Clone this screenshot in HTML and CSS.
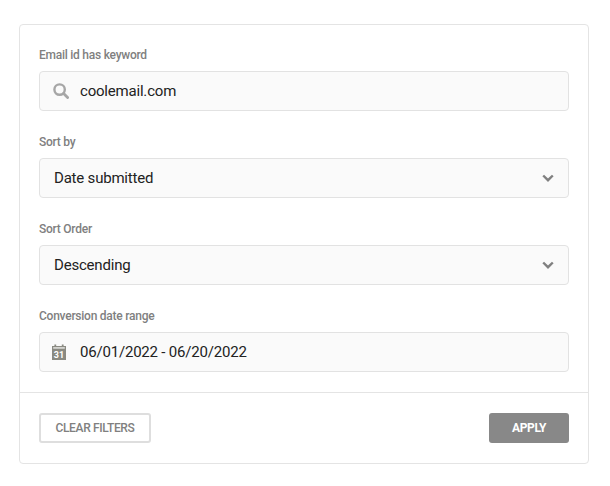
FILE: index.html
```html
<!DOCTYPE html>
<html lang="en">
<head>
<meta charset="utf-8">
<title>Filters</title>
<link rel="stylesheet" href="styles.css">
</head>
<body>
<form class="card">
  <div class="fields">
    <div class="field">
      <label class="label">Email id has keyword</label>
      <div class="control">
        <svg class="icon icon-search" width="16" height="16" viewBox="0 0 16 16"><circle cx="6.6" cy="6.6" r="5.2" fill="none" stroke="#a6a6a6" stroke-width="2.4"/><path d="M10.6 10.6 14.6 14.6" stroke="#a6a6a6" stroke-width="2.8" stroke-linecap="round"/></svg>
        <span class="value">coolemail.com</span>
      </div>
    </div>
    <div class="field">
      <label class="label">Sort by</label>
      <div class="control select">
        <span class="value">Date submitted</span>
        <svg class="chevron" width="12" height="8" viewBox="0 0 12 8"><path d="M1.2 1.5 6 6.2l4.8-4.7" fill="none" stroke="#808080" stroke-width="2.4"/></svg>
      </div>
    </div>
    <div class="field">
      <label class="label">Sort Order</label>
      <div class="control select">
        <span class="value">Descending</span>
        <svg class="chevron" width="12" height="8" viewBox="0 0 12 8"><path d="M1.2 1.5 6 6.2l4.8-4.7" fill="none" stroke="#808080" stroke-width="2.4"/></svg>
      </div>
    </div>
    <div class="field">
      <label class="label">Conversion date range</label>
      <div class="control">
        <svg class="icon icon-cal" width="14" height="16" viewBox="0 0 14 16"><path d="M0 2h2.4V.6h1.8V2h5.6V.6h1.8V2H14v14H0z" fill="#8a8a82"/><rect x="1.2" y="3" width="11.6" height="1.8" fill="#d4d4d0"/><text x="7" y="14" text-anchor="middle" class="cal-day">31</text></svg>
        <span class="value">06/01/2022 - 06/20/2022</span>
      </div>
    </div>
  </div>
  <div class="actions">
    <button type="button" class="btn btn-clear">CLEAR FILTERS</button>
    <button type="button" class="btn btn-apply">APPLY</button>
  </div>
</form>
</body>
</html>
```
FILE: styles.css
```css
* { box-sizing: border-box; }
html, body { margin: 0; background: #fff; }
body {
  padding: 24px 21px 22px 19px;
  font-family: Roboto, "Liberation Sans", sans-serif;
}
.card {
  width: 570px;
  height: 440px;
  border: 1px solid #e4e4e4;
  border-radius: 4px;
  background: #fff;
  display: flex;
  flex-direction: column;
}
.fields {
  height: 368px;
  padding: 22px 19px 0;
  border-bottom: 1px solid #e4e4e4;
  display: flex;
  flex-direction: column;
  gap: 23px;
}
.label {
  display: block;
  height: 16px;
  margin-bottom: 8px;
  font-size: 12px;
  line-height: 16px;
  color: #808080;
  font-weight: 500;
  letter-spacing: -0.25px;
}
.control {
  height: 40px;
  border: 1px solid #e2e2e2;
  border-radius: 4px;
  background: #fafafa;
  display: flex;
  align-items: center;
  padding: 0 14px;
  font-size: 15px;
  font-weight: 440;
  color: #222;
}
.control .icon { flex: none; }
.icon-search { margin: 0 11px 0 -1px; }
.icon-cal { margin: 0 14px 0 -2px; }
.control .value { letter-spacing: -0.2px; }
.select { justify-content: space-between; }
.chevron { flex: none; }
.cal-day { font: 700 9px Roboto, sans-serif; fill: #fff; }
.actions {
  flex: 1;
  padding: 20px 19px 0;
  display: flex;
  justify-content: space-between;
  align-items: flex-start;
}
.btn {
  height: 30px;
  border-radius: 3px;
  font: 500 12px Roboto, "Liberation Sans", sans-serif;
  letter-spacing: -0.35px;
  color: #808080;
  padding: 0;
}
.btn-clear {
  width: 112px;
  border: 2px solid #dedede;
  background: #fff;
}
.btn-apply {
  width: 80px;
  border: 0;
  background: #888;
  color: #fff;
  font-weight: 700;
}
```
